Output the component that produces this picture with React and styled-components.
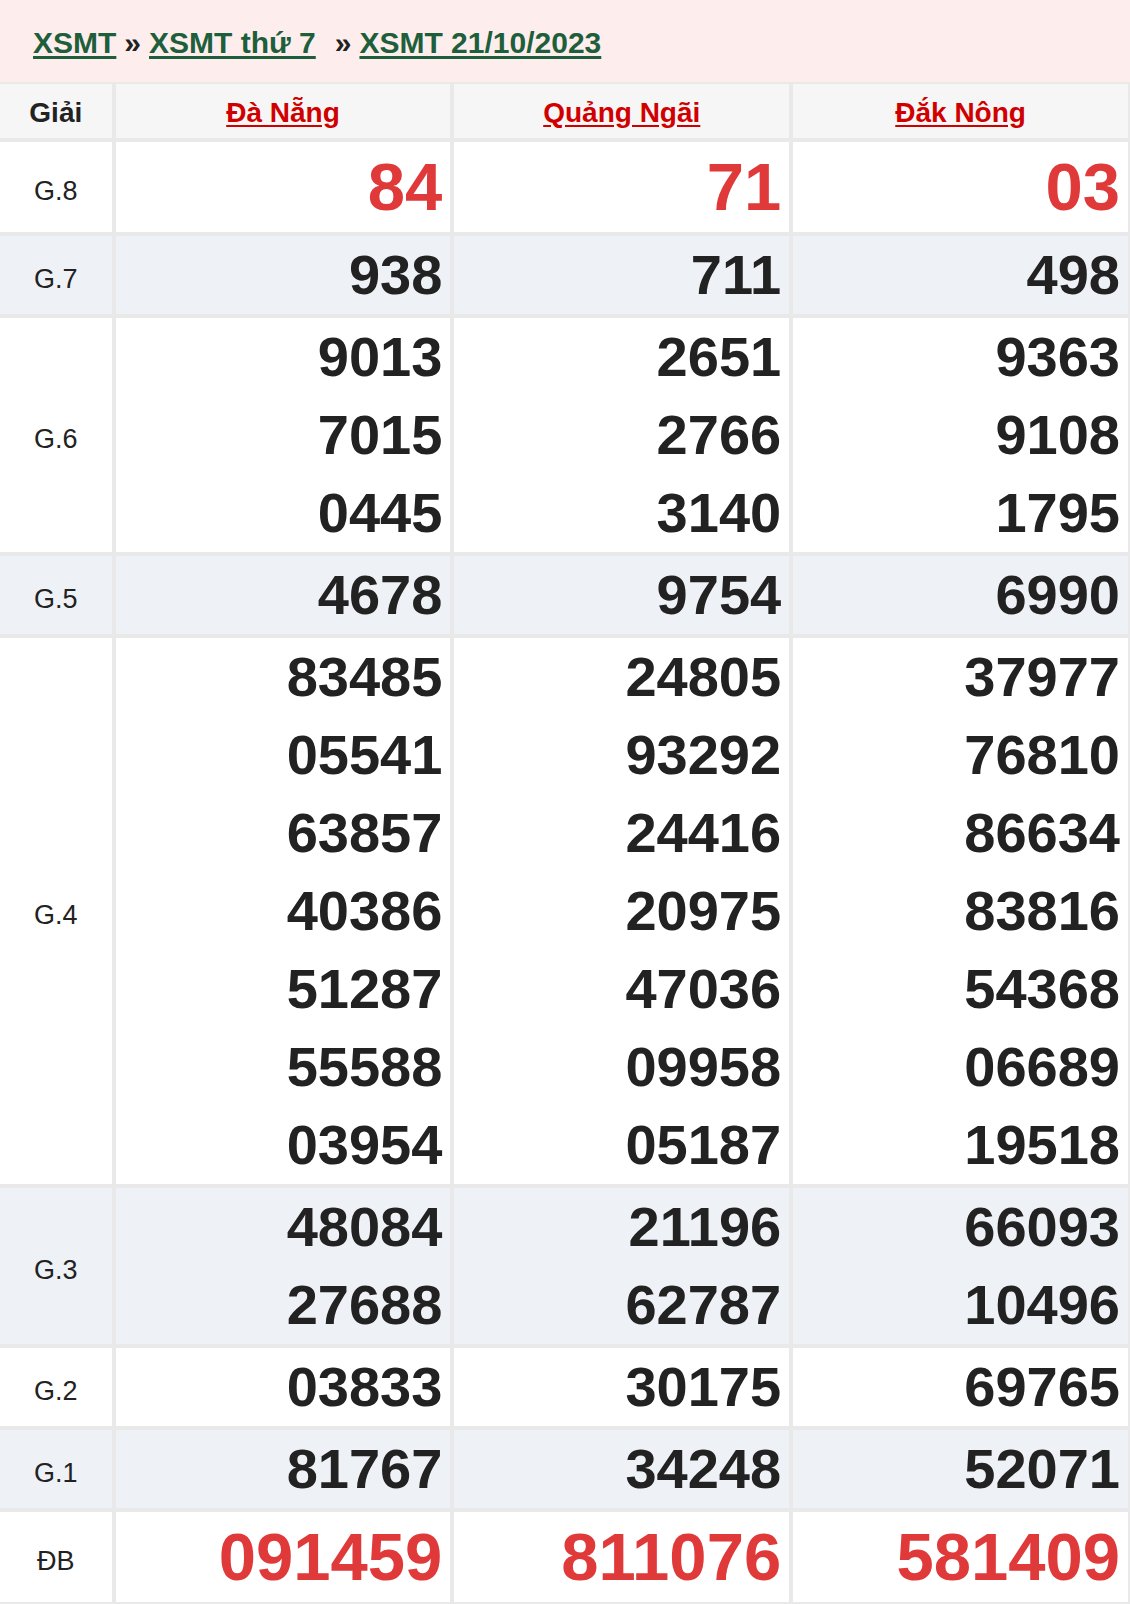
import React from "react";
import styled, { createGlobalStyle } from "styled-components";

const GlobalStyle = createGlobalStyle`
  body {
    margin: 0;
    background: #fff;
    font-family: "Liberation Sans", Arial, sans-serif;
  }
`;

const Breadcrumb = styled.div`
  height: 82px;
  padding: 4px 0 0 33px;
  box-sizing: border-box;
  display: flex;
  align-items: center;
  background: #fdeeed;
  font-size: 30px;
  font-weight: bold;
  color: #222;
  white-space: pre;
`;
const Crumb = styled.a`
  color: #1e5e3b;
  text-decoration: underline;
  text-underline-offset: 3px;
`;
const Sep = styled.span`
  margin: ${({ wide }) => (wide ? "0 8px 0 19px" : "0 8px")};
`;

const Table = styled.table`
  width: 100%;
  table-layout: fixed;
  border-collapse: separate;
  border-spacing: 0;
`;
const Th = styled.th`
  width: ${({ narrow }) => (narrow ? "10%" : "30%")};
  background: #f6f6f6;
  border: 2px solid #e9e9e9;
  border-left-width: ${({ narrow }) => (narrow ? 0 : "2px")};
  line-height: 50px;
  padding: 4px 0 0;
  font-size: 28px;
  font-weight: bold;
  color: #222;
  text-align: center;
`;
const Province = styled.a`
  color: #d10000;
  text-decoration: underline;
  text-underline-offset: 3px;
`;
const Row = styled.tr`
  background: ${({ alt }) => (alt ? "#eef1f6" : "#fff")};
`;
const Label = styled.td`
  border: 2px solid #e9e9e9;
  border-left-width: 0;
  padding: 8px 0 0;
  text-align: center;
  vertical-align: middle;
  font-size: 27px;
  color: #222;
`;
const Cell = styled.td`
  border: 2px solid #e9e9e9;
  padding: 0 8px 0 0;
  text-align: right;
  vertical-align: middle;
`;
const Number = styled.div`
  font-weight: bold;
  font-size: ${({ big }) => (big ? "67px" : "56px")};
  line-height: ${({ big }) => (big ? "90px" : "78px")};
  color: ${({ big }) => (big ? "#e0393a" : "#222")};
`;

const provinces = ["Đà Nẵng", "Quảng Ngãi", "Đắk Nông"];

const results = [
  { prize: "G.8", big: true, nums: [["84"], ["71"], ["03"]] },
  { prize: "G.7", nums: [["938"], ["711"], ["498"]] },
  {
    prize: "G.6",
    nums: [
      ["9013", "7015", "0445"],
      ["2651", "2766", "3140"],
      ["9363", "9108", "1795"]
    ]
  },
  { prize: "G.5", nums: [["4678"], ["9754"], ["6990"]] },
  {
    prize: "G.4",
    nums: [
      ["83485", "05541", "63857", "40386", "51287", "55588", "03954"],
      ["24805", "93292", "24416", "20975", "47036", "09958", "05187"],
      ["37977", "76810", "86634", "83816", "54368", "06689", "19518"]
    ]
  },
  {
    prize: "G.3",
    nums: [
      ["48084", "27688"],
      ["21196", "62787"],
      ["66093", "10496"]
    ]
  },
  { prize: "G.2", nums: [["03833"], ["30175"], ["69765"]] },
  { prize: "G.1", nums: [["81767"], ["34248"], ["52071"]] },
  { prize: "ĐB", big: true, nums: [["091459"], ["811076"], ["581409"]] }
];

const App = () => {
  return (
    <div>
      <GlobalStyle />
      <Breadcrumb>
        <Crumb href="#">XSMT</Crumb>
        <Sep>»</Sep>
        <Crumb href="#">XSMT thứ 7</Crumb>
        <Sep wide>»</Sep>
        <Crumb href="#">XSMT 21/10/2023</Crumb>
      </Breadcrumb>
      <Table>
        <thead>
          <tr>
            <Th narrow>Giải</Th>
            {provinces.map(name => (
              <Th key={name}>
                <Province href="#">{name}</Province>
              </Th>
            ))}
          </tr>
        </thead>
        <tbody>
          {results.map((row, i) => (
            <Row key={row.prize} alt={i % 2 === 1}>
              <Label>{row.prize}</Label>
              {row.nums.map((list, j) => (
                <Cell key={j}>
                  {list.map(n => (
                    <Number key={n} big={row.big}>
                      {n}
                    </Number>
                  ))}
                </Cell>
              ))}
            </Row>
          ))}
        </tbody>
      </Table>
    </div>
  );
};

export default App;
